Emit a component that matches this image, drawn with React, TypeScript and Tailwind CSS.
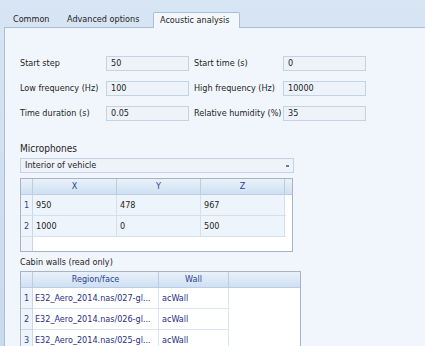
import React from "react";

const font = { fontFamily: '"DejaVu Sans Condensed", "DejaVu Sans", Verdana, sans-serif' };

function Field({ value }: { value: string }) {
  return (
    <div className="h-[15px] w-[83px] border border-[#c3d3e6] bg-[#eef3f9] pl-[4px] text-[9px] leading-[13px] text-[#1e1e1e]">
      {value}
    </div>
  );
}

export default function App() {
  return (
    <div
      className="w-[425px] h-[346px] overflow-hidden flex flex-col bg-gradient-to-b from-[#d8e5f4] to-[#c8daee] text-[9px] text-[#1e1e1e] whitespace-nowrap"
      style={font}
    >
      {/* Tabs */}
      <div className="h-[27px] flex items-end shrink-0">
        <div className="w-[13px]" />
        <div className="h-[15px] leading-[15px] w-[54px]">Common</div>
        <div className="h-[15px] leading-[15px] w-[86px]">Advanced options</div>
        <div className="h-[16px] leading-[15px] w-[87px] pl-[6px] border border-b-0 border-[#a6bfdd] rounded-t-[2px] bg-[#f3f7fc] relative top-[1px]">
          Acoustic analysis
        </div>
      </div>
      {/* Panel */}
      <div className="flex-1 ml-[4px] border-l border-t border-[#a6bfdd] bg-[#f1f6fc] pl-[15px] pt-[28px]">
        <div className="flex flex-col gap-[10px]">
          {[
            ["Start step", "50", "Start time (s)", "0"],
            ["Low frequency (Hz)", "100", "High frequency (Hz)", "10000"],
            ["Time duration (s)", "0.05", "Relative humidity (%)", "35"],
          ].map((r) => (
            <div key={r[0]} className="flex items-center h-[15px]">
              <div className="w-[86px]">{r[0]}</div>
              <Field value={r[1]} />
              <div className="w-[94px] pl-[5px]">{r[2]}</div>
              <Field value={r[3]} />
            </div>
          ))}
        </div>
        <div className="mt-[22px] text-[10px] leading-[12px]">Microphones</div>
        <div className="mt-[3px] w-[274px] h-[15px] border border-[#c3d3e6] bg-[#eef3f9] pl-[4px] flex items-center justify-between pr-[4px]">
          <span className="leading-[13px]">Interior of vehicle</span>
          <span className="w-[3px] h-[2px] bg-[#6d7a8c]" />
        </div>
        {/* Table 1 */}
        <div className="mt-[5px] w-[273px] h-[74px] border border-[#a9b4c2] bg-white flex flex-col">
          <div className="flex h-[16px] bg-gradient-to-b from-[#e9f1fa] to-[#cfe0f3] border-b border-[#b9cde4] text-[#2b3f8e]">
            <div className="w-[12px] border-r border-[#b9cde4]" />
            <div className="w-[84px] border-r border-[#b9cde4] text-center leading-[15px]">X</div>
            <div className="w-[84px] border-r border-[#b9cde4] text-center leading-[15px]">Y</div>
            <div className="w-[84px] border-r border-[#b9cde4] text-center leading-[15px]">Z</div>
            <div className="flex-1" />
          </div>
          {[
            ["1", "950", "478", "967"],
            ["2", "1000", "0", "500"],
          ].map((r) => (
            <div key={r[0]} className="flex h-[21px] w-[265px] border-b border-[#d2e0ef]">
              <div className="w-[12px] bg-[#eef4fb] border-r border-[#c8d8ea] text-[#2b3f8e] text-center leading-[20px]">{r[0]}</div>
              <div className="w-[84px] bg-[#eef4fb] border-r border-[#d2e0ef] pl-[3px] leading-[20px]">{r[1]}</div>
              <div className="w-[84px] bg-[#eef4fb] border-r border-[#d2e0ef] pl-[3px] leading-[20px]">{r[2]}</div>
              <div className="w-[84px] bg-[#eef4fb] border-r border-[#d2e0ef] pl-[3px] leading-[20px]">{r[3]}</div>
            </div>
          ))}
          <div className="flex-1 flex">
            <div className="w-[12px] bg-[#eef4fb] border-r border-[#c8d8ea]" />
          </div>
        </div>
        <div className="mt-[4px] leading-[12px]">Cabin walls (read only)</div>
        {/* Table 2 */}
        <div className="mt-[3px] w-[281px] border border-[#a9b4c2] border-b-0 bg-white flex flex-col">
          <div className="flex h-[16px] bg-gradient-to-b from-[#e9f1fa] to-[#cfe0f3] border-b border-[#b9cde4] text-[#2b3f8e]">
            <div className="w-[12px] border-r border-[#b9cde4]" />
            <div className="w-[126px] border-r border-[#b9cde4] text-center leading-[15px]">Region/face</div>
            <div className="w-[70px] border-r border-[#b9cde4] text-center leading-[15px]">Wall</div>
            <div className="flex-1" />
          </div>
          {[
            ["1", "E32_Aero_2014.nas/027-gl..."],
            ["2", "E32_Aero_2014.nas/026-gl..."],
            ["3", "E32_Aero_2014.nas/025-gl..."],
          ].map((r) => (
            <div key={r[0]} className="flex h-[21px]">
              <div className="w-[12px] bg-[#eef4fb] border-r border-b border-[#c8d8ea] text-[#2b3f8e] text-center leading-[20px]">{r[0]}</div>
              <div className="w-[126px] border-r border-b border-[#d9e6f3] pl-[2px] leading-[20px] text-[#1f2e8a] overflow-hidden">{r[1]}</div>
              <div className="w-[70px] border-r border-b border-[#d9e6f3] pl-[3px] leading-[20px] text-[#1f2e8a]">acWall</div>
              <div className="flex-1" />
            </div>
          ))}
        </div>
      </div>
    </div>
  );
}
